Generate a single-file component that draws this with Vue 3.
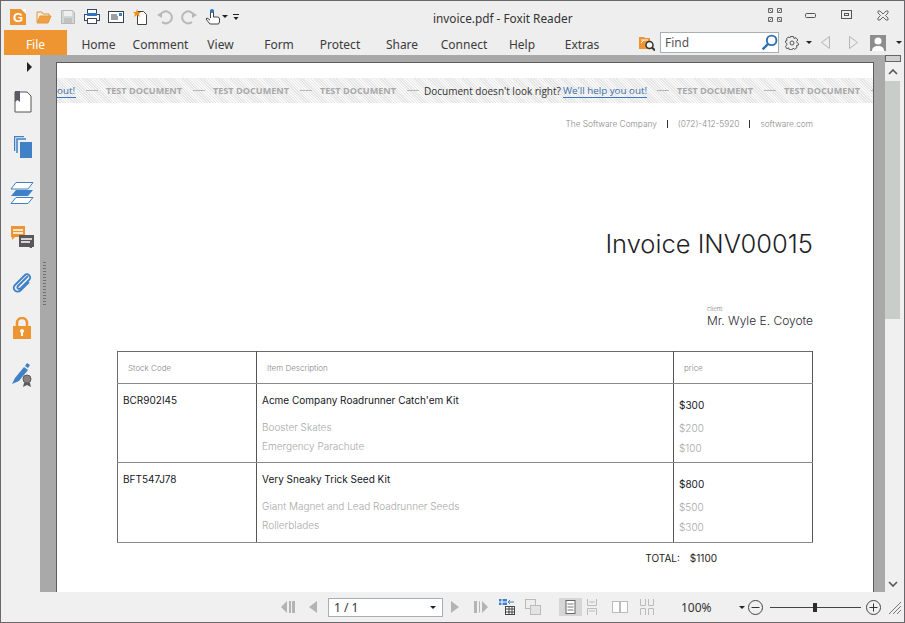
<script setup>
// Tab widths keep each label centred where the ribbon puts it
const tabs = [
  { label: 'Home', width: 63 },
  { label: 'Comment', width: 61 },
  { label: 'View', width: 59 },
  { label: 'Form', width: 58 },
  { label: 'Protect', width: 64 },
  { label: 'Share', width: 60 },
  { label: 'Connect', width: 64 },
  { label: 'Help', width: 52 },
  { label: 'Extras', width: 68 }
]

const rows = [
  {
    code: 'BCR902I45',
    title: "Acme Company Roadrunner Catch'em Kit",
    price: '$300',
    extras: [
      { name: 'Booster Skates', price: '$200' },
      { name: 'Emergency Parachute', price: '$100' }
    ]
  },
  {
    code: 'BFT547J78',
    title: 'Very Sneaky Trick Seed Kit',
    price: '$800',
    extras: [
      { name: 'Giant Magnet and Lead Roadrunner Seeds', price: '$500' },
      { name: 'Rollerblades', price: '$300' }
    ]
  }
]
</script>

<template>
  <div class="window">
    <header class="titlebar">
      <div class="quick">
        <svg class="ico" viewBox="0 0 16 16"><rect width="16" height="16" fill="#ee9430"/><text x="3" y="13" class="logo-g">G</text><path d="M11 0h5v5z" fill="#fff"/></svg>
        <svg class="ico ml2" viewBox="0 0 16 16"><path d="M1 13V3h5l1 2h6v2" fill="none" stroke="#e8962e"/><path d="M1 14l3-7h11l-3 7z" fill="#eda04a" stroke="#e8962e"/></svg>
        <svg class="ico" viewBox="0 0 16 16"><path d="M1.500 1.500h11l2 2v11h-13z" fill="#d4d6d6" stroke="#b5b8b8"/><rect x="4" y="2" width="8" height="5" fill="#eee"/><rect x="4" y="9" width="8" height="5" fill="#bfc2c2"/></svg>
        <svg class="ico" viewBox="0 0 16 16"><rect x="3.500" y="0.500" width="9" height="5" fill="#fff" stroke="#3a4a5c"/><rect x="0.500" y="5.500" width="15" height="6" fill="#fff" stroke="#3a4a5c"/><rect x="3" y="4" width="10" height="3" fill="#2f77c0"/><rect x="3.500" y="9.500" width="9" height="5" fill="#fff" stroke="#3a4a5c"/></svg>
        <svg class="ico" viewBox="0 0 16 16"><rect x="0.500" y="2.500" width="15" height="11" fill="#fff" stroke="#3a3f48"/><path d="M3 6h6M3 8h7M3 10h7" stroke="#3a3f48"/><rect x="11" y="4" width="3" height="3" fill="#3b7fc4"/></svg>
        <svg class="ico" viewBox="0 0 16 16"><path d="M5.500 2.500h6l3 3v10h-9z" fill="#fff" stroke="#444"/><path d="M5 0l1 3 3 0-2 2 1 3-3-2-3 2 1-3-2-2 3 0z" fill="#ee8f1f"/></svg>
        <svg class="ico ml1" viewBox="0 0 16 16"><path d="M3 7a6 6 0 1 1 2 6" fill="none" stroke="#b8b8b8" stroke-width="2"/><path d="M0 6l5-3v6z" fill="#b8b8b8"/></svg>
        <svg class="ico" viewBox="0 0 16 16"><path d="M13 7a6 6 0 1 0-2 6" fill="none" stroke="#b8b8b8" stroke-width="2"/><path d="M16 6l-5-3v6z" fill="#b8b8b8"/></svg>
        <svg class="ico" viewBox="0 0 16 16"><path d="M5.500 9V3a1 1 0 0 1 3 0v5h4a2 2 0 0 1 2 2v3l-1 2H5l-4-5 1-1 3 2" fill="#fff" stroke="#444"/><rect x="5" y="0" width="4" height="4" rx="2" fill="#2f77c0"/></svg>
        <span class="caret hand-caret"></span>
        <span class="more"></span>
      </div>
      <div class="doc-title">invoice.pdf - Foxit Reader</div>
      <div class="winbtns">
        <svg class="win-full" viewBox="0 0 14 14" width="14" height="14"><path d="M.5.5h4v4h-4zM9.500.5h4v4h-4zM.5 9.500h4v4h-4zM9.500 9.500h4v4h-4zM1.500 1.500l2 2M12.500 1.500l-2 2M1.500 12.500l2-2M12.500 12.500l-2-2" fill="none" stroke="#666"/></svg>
        <svg class="win-min" viewBox="0 0 12 5" width="12" height="5"><rect x=".5" y=".5" width="10" height="4" rx="1" fill="none" stroke="#555"/></svg>
        <svg class="win-max" viewBox="0 0 12 10" width="12" height="10"><rect x=".5" y=".5" width="10" height="8" fill="none" stroke="#555"/><rect x="3.500" y="3.500" width="4" height="2" fill="none" stroke="#555"/></svg>
        <svg class="win-close" viewBox="0 0 12 11" width="12" height="11"><path d="M1 1h2l3 3 3-3h2v2L8.500 5.500 11 8v2H9L6 7l-3 3H1V8l2.500-2.500L1 3z" fill="none" stroke="#666"/></svg>
      </div>
    </header>

    <nav class="ribbon">
      <div class="file-tab">File</div>
      <div
        v-for="tab in tabs"
        :key="tab.label"
        class="tab"
        :style="{ width: tab.width + 'px' }"
      >{{ tab.label }}</div>
      <div class="ribbon-right">
        <svg class="find-folder" viewBox="0 0 16 16" width="16" height="16"><path d="M0 2h5l1 1h5v11H0z" fill="#ee9430"/><path d="M2 5h7M2 8l3-3" stroke="#fff"/><circle cx="10.500" cy="10" r="3.500" fill="#f4f4f4" stroke="#333" stroke-width="1.500"/><path d="M13 12.500l3 3" stroke="#333" stroke-width="2"/></svg>
        <div class="find">
          <span>Find</span>
          <svg viewBox="0 0 16 16" width="17" height="17"><circle cx="10" cy="6" r="4.500" fill="none" stroke="#2f6fb5" stroke-width="1.800"/><path d="M6.500 9.500L1.500 14.500" stroke="#2f6fb5" stroke-width="2.200"/></svg>
        </div>
        <svg class="gear" viewBox="0 0 14 14" width="14" height="14"><circle cx="7" cy="7" r="2" fill="none" stroke="#555"/><path d="M5.500.5h3l.5 2 2-.8 1.800 2.300-1.300 1.600.9 1.400 1.100.5v1.500l-2 .5.500 2-2.200 1.800-1.800-1.100-.8 1.500h-3l-.5-1.800-2 .8L.5 10.300 2 8.700 1.500 7 .5 6.500V5l1.500-.5-.5-2L4 .9l1 1z" fill="none" stroke="#555"/></svg>
        <span class="caret gear-caret"></span>
        <svg class="nav-l" viewBox="0 0 9 13" width="9" height="13"><path d="M8.500.5v12l-8-6z" fill="none" stroke="#b5b5b5"/></svg>
        <svg class="nav-r" viewBox="0 0 9 13" width="9" height="13"><path d="M.5.5v12l8-6z" fill="none" stroke="#b5b5b5"/></svg>
        <svg class="avatar" viewBox="0 0 16 16" width="16" height="16"><rect width="16" height="16" fill="#8d8d8d"/><circle cx="8" cy="6" r="3.500" fill="#fff"/><path d="M2 16c0-4 3-5 6-5s6 1 6 5z" fill="#fff"/></svg>
        <span class="caret avatar-caret"></span>
      </div>
    </nav>

    <main class="body">
      <aside class="sidebar">
        <span class="side-arrow"></span>
        <svg class="side-ico s-book" viewBox="0 0 18 22" width="18" height="22"><path d="M1 1h12l4 4v16H1z" fill="#fff" stroke="#555"/><path d="M1 0h5v11l-2.500-2L1 11z" fill="#5a5a66"/></svg>
        <svg class="side-ico s-pages" viewBox="0 0 18 22" width="18" height="22"><path d="M.5 15V.5H10M3 17V3h9" fill="none" stroke="#3f80c6" stroke-width="1.500"/><path d="M6 6h12v16H6z" fill="#3f80c6"/></svg>
        <svg class="side-ico s-layers" viewBox="0 0 24 22" width="24" height="22"><path d="M6 .5h17L18 7H1z" fill="#fff" stroke="#3f80c6"/><path d="M6 8h17l-5 6H1z" fill="#3f80c6"/><path d="M6 15.500h17l-5 6H1z" fill="#fff" stroke="#3f80c6"/></svg>
        <svg class="side-ico s-comment" viewBox="0 0 23 22" width="23" height="22"><path d="M0 0h14v11H4l-3 3v-3H0z" fill="#ee9430"/><path d="M2 4h10M2 7h10" stroke="#fff" stroke-width="1.300"/><path d="M8 9h15v12h-2v2l-3-2H8z" fill="#5a565a"/><path d="M10 13h11M10 16h9" stroke="#fff" stroke-width="1.300"/></svg>
        <svg class="side-ico s-clip" viewBox="0 0 20 22" width="20" height="22"><path d="M16 5L6 15c-2 2 1 4 3 2L17 9c3-3-1-8-4-5L3 14c-4 4 2 9 6 5l8-8" fill="none" stroke="#3f80c6" stroke-width="1.800" transform="translate(0 -1)"/></svg>
        <svg class="side-ico s-lock" viewBox="0 0 18 22" width="18" height="22"><path d="M4 10V6a5 5 0 0 1 10 0v4" fill="none" stroke="#ee9430" stroke-width="2.500"/><rect y="9" width="18" height="13" fill="#ee9430"/><circle cx="9" cy="14" r="2" fill="#fff"/><rect x="8" y="15" width="2" height="4" fill="#fff"/></svg>
        <svg class="side-ico s-sign" viewBox="0 0 21 24" width="21" height="24"><path d="M0 21l3-6L12 4l4 3-9 11z" fill="#3f80c6"/><path d="M13 3l2-3 3 2-2 3z" fill="#3f80c6"/><circle cx="15" cy="16" r="4" fill="#8a8276" stroke="#5a5a66"/><path d="M12 20l-1 4 4-2 4 2-1-4" fill="#5a5a66"/></svg>
      </aside>

      <section class="workspace">
        <span class="grip"></span>
        <article class="page">
          <div class="banner">
            <span class="link cut">out!</span>
            <span class="dash"></span><b>TEST DOCUMENT</b>
            <span class="dash"></span><b>TEST DOCUMENT</b>
            <span class="dash"></span><b>TEST DOCUMENT</b>
            <span class="dash"></span>
            <span class="ask">Document doesn't look right?</span>
            <span class="link">We'll help you out!</span>
            <span class="dash"></span><b>TEST DOCUMENT</b>
            <span class="dash"></span><b>TEST DOCUMENT</b>
            <span class="dash"></span>
          </div>

          <div class="contact">
            <span>The Software Company</span>
            <i></i>
            <span>(072)-412-5920</span>
            <i></i>
            <span>software.com</span>
          </div>

          <h1>Invoice INV00015</h1>

          <div class="client-label">client:</div>
          <div class="client">Mr. Wyle E. Coyote</div>

          <table class="items">
            <thead>
              <tr>
                <th class="c-code">Stock Code</th>
                <th class="c-desc">Item Description</th>
                <th class="c-price">price</th>
              </tr>
            </thead>
            <tbody>
              <tr v-for="row in rows" :key="row.code">
                <td class="code">{{ row.code }}</td>
                <td class="desc">
                  <div class="main">{{ row.title }}</div>
                  <div v-for="e in row.extras" :key="e.name" class="extra">{{ e.name }}</div>
                </td>
                <td class="price">
                  <div class="main">{{ row.price }}</div>
                  <div v-for="e in row.extras" :key="e.name" class="extra">{{ e.price }}</div>
                </td>
              </tr>
            </tbody>
          </table>

          <div class="total">
            <span>TOTAL:</span>
            <span>$1100</span>
          </div>
        </article>
      </section>

      <div class="scrollbar">
        <span class="scroll-top"></span>
        <svg class="scroll-btn" viewBox="0 0 10 6" width="10" height="6"><path d="M1 5l4-4 4 4" fill="none" stroke="#555" stroke-width="1.600"/></svg>
        <div class="thumb"></div>
        <svg class="scroll-btn down" viewBox="0 0 10 6" width="10" height="6"><path d="M1 1l4 4 4-4" fill="none" stroke="#555" stroke-width="1.600"/></svg>
      </div>
    </main>

    <footer class="status">
      <svg class="st first" viewBox="0 0 14 14" width="14" height="14"><path d="M6 1v12L0 7zM8 1h2v12H8zM14 1v12h-3V1z" fill="#b4b4b4"/></svg>
      <svg class="st prev" viewBox="0 0 9 14" width="9" height="14"><path d="M9 1v12L1 7z" fill="#b4b4b4"/></svg>
      <div class="page-box"><span>1 / 1</span><span class="caret"></span></div>
      <svg class="st next" viewBox="0 0 9 14" width="9" height="14"><path d="M0 1v12l8-6z" fill="#b4b4b4"/></svg>
      <svg class="st last" viewBox="0 0 14 14" width="14" height="14"><path d="M0 1h3v12H0zM5 1v12l1-1V2zM8 1v12l6-6z" fill="#b4b4b4"/></svg>
      <svg class="st view1" viewBox="0 0 16 16" width="16" height="16"><rect x="0" y="0" width="8" height="6" fill="#3f80c6"/><path d="M0 3h8M3 0v6" stroke="#fff"/><rect x="6.500" y="7.500" width="9" height="8" fill="#fff" stroke="#444"/><path d="M7 10h8M7 13h8M10 8v7M13 8v7" stroke="#444"/><path d="M9 3h6M9 3l2-2M9 3l2 2" stroke="#3f80c6" fill="none"/></svg>
      <svg class="st view2" viewBox="0 0 16 16" width="16" height="16"><rect x=".5" y=".5" width="10" height="9" fill="#eee" stroke="#bbb"/><rect x="5.500" y="6.500" width="10" height="9" fill="#e4e4e4" stroke="#bbb"/></svg>
      <span class="single">
        <svg viewBox="0 0 10 14" width="11" height="14"><rect x=".5" y=".5" width="9" height="13" fill="#fff" stroke="#666"/><path d="M2 4h6M2 7h6M2 10h6" stroke="#777"/></svg>
      </span>
      <svg class="st continuous" viewBox="0 0 14 16" width="14" height="16"><path d="M2.500 0v6.500h9V0M2.500 16V9.500h9V16M4 3h6M4 12h6" fill="none" stroke="#bbb"/></svg>
      <svg class="st facing" viewBox="0 0 16 14" width="16" height="14"><rect x=".5" y="1.500" width="7" height="11" fill="#fff" stroke="#bbb"/><rect x="8.500" y="1.500" width="7" height="11" fill="#fff" stroke="#bbb"/></svg>
      <svg class="st cont-facing" viewBox="0 0 16 16" width="16" height="16"><path d="M1.500 0v6.500h5V0M9.500 0v6.500h5V0M1.500 16V9.500h5V16M9.500 16V9.500h5V16" fill="none" stroke="#bbb"/></svg>
      <span class="zoom-val">100%</span>
      <span class="caret zoom-caret"></span>
      <svg class="st minus" viewBox="0 0 15 15" width="15" height="15"><circle cx="7.500" cy="7.500" r="7" fill="none" stroke="#444"/><path d="M3.500 7.500h8" stroke="#333"/></svg>
      <div class="slider"><span class="knob"></span></div>
      <svg class="st plus" viewBox="0 0 15 15" width="15" height="15"><circle cx="7.500" cy="7.500" r="7" fill="none" stroke="#444"/><path d="M3.500 7.500h8M7.500 3.500v8" stroke="#333"/></svg>
      <svg class="st resize" viewBox="0 0 14 14" width="14" height="14"><path d="M1 13L13 1M5 13l8-8M9 13l4-4" stroke="#777"/></svg>
    </footer>
  </div>
</template>

<style scoped>
.window {
  width: 905px;
  height: 623px;
  box-sizing: border-box;
  border: 1px solid #6a666a;
  display: flex;
  flex-direction: column;
  overflow: hidden;
  background: #f0f0f0;
  font-family: "Noto Sans", "Open Sans", sans-serif;
  color: #333;
}

/* title bar */
.titlebar {
  height: 29px;
  flex: none;
  position: relative;
  display: flex;
  align-items: center;
  background: #eeeeee;
}
.quick {
  display: flex;
  align-items: center;
  gap: 8px;
  padding-left: 9px;
  margin-top: 2px;
}
.ico {
  width: 16px;
  height: 16px;
  flex: none;
}
.logo-g {
  font: bold 13px "Liberation Sans", sans-serif;
  fill: #fff;
}
.ml1 { margin-left: 1px; }
.ml2 { margin-left: 2px; }
.caret {
  width: 0;
  height: 0;
  flex: none;
  border-left: 3px solid transparent;
  border-right: 3px solid transparent;
  border-top: 3px solid #222;
}
.hand-caret { margin-left: -7px; }
.more {
  width: 6px;
  height: 5px;
  margin-left: -3px;
  margin-top: 1px;
  border-top: 1px solid #222;
  background: linear-gradient(#222, #222) 0 2px / 6px 3px no-repeat;
  clip-path: polygon(0 0, 100% 0, 100% 40%, 50% 100%, 0 40%);
}
.doc-title {
  position: absolute;
  left: 432px;
  top: 9px;
  font-size: 11.800px;
  line-height: 16px;
  white-space: nowrap;
}
.winbtns {
  margin-left: auto;
  display: flex;
  align-items: center;
}
.win-full { margin-right: 23px; margin-top: -2px; }
.win-min { margin-right: 24px; margin-top: -1px; }
.win-max { margin-right: 24px; margin-top: -1px; }
.win-close { margin-right: 15px; margin-top: -1px; }

/* ribbon tabs */
.ribbon {
  height: 25px;
  flex: none;
  display: flex;
  align-items: stretch;
  padding-left: 3px;
  background: #eeeeee;
  font-size: 12px;
}
.file-tab {
  width: 63px;
  background: #ee9430;
  color: #fff;
  text-align: center;
  line-height: 29px;
}
.tab {
  flex: none;
  text-align: center;
  line-height: 29px;
  color: #3c3c3c;
  white-space: nowrap;
}
.ribbon-right {
  flex: 1;
  display: flex;
  align-items: center;
  padding-left: 23px;
}
.find-folder { margin-top: 1px; }
.find {
  width: 119px;
  height: 21px;
  margin-left: 5px;
  box-sizing: border-box;
  border: 1px solid #a9aeb3;
  background: #fff;
  display: flex;
  align-items: center;
  justify-content: space-between;
  padding: 0 0 0 4px;
  color: #555;
}
.gear { margin-left: 6px; }
.gear-caret { margin-left: 7px; }
.nav-l { margin-left: 9px; }
.nav-r { margin-left: 19px; }
.avatar { margin-left: 12px; }
.avatar-caret { margin-left: 10px; }

/* main area */
.body {
  flex: 1;
  min-height: 0;
  display: flex;
}
.sidebar {
  width: 39px;
  flex: none;
  display: flex;
  flex-direction: column;
  background: #f0f0f0;
  position: relative;
}
.side-arrow {
  width: 0;
  height: 0;
  margin: 7px 0 0 26px;
  border-top: 5px solid transparent;
  border-bottom: 5px solid transparent;
  border-left: 5px solid #222;
}
.side-ico { flex: none; }
.s-book { margin: 19px 0 0 13px; }
.s-pages { margin: 23px 0 0 13px; }
.s-layers { margin: 24px 0 0 9px; }
.s-comment { margin: 22px 0 0 10px; }
.s-clip { margin: 24px 0 0 11px; }
.s-lock { margin: 23px 0 0 12px; }
.s-sign { margin: 24px 0 0 11px; }

.workspace {
  flex: 1;
  min-width: 0;
  background: #a9a9a9;
  padding: 7px 11px 0 16px;
  display: flex;
  position: relative;
}
.grip {
  position: absolute;
  left: 3px;
  top: 207px;
  width: 3px;
  height: 44px;
  background: repeating-linear-gradient(#6f6f6f 0 1px, transparent 1px 3px);
}
.page {
  flex: 1;
  min-width: 0;
  background: #fff;
  border: 1px solid #5c5c5c;
  border-width: 1px 1px 0;
  overflow: hidden;
  font-family: Inter, "Noto Sans", sans-serif;
}
.banner {
  margin-top: 15px;
  height: 25px;
  display: flex;
  align-items: center;
  overflow: hidden;
  white-space: nowrap;
  font-family: "Open Sans", sans-serif;
  font-size: 10px;
  background: repeating-linear-gradient(45deg, #e6e6e6 0 1px, #f8f8f8 1px 2px);
}
.banner b {
  width: 77px;
  flex: none;
  color: #a9a9a9;
  font-size: 9.100px;
  font-weight: 700;
  white-space: nowrap;
}
.dash {
  width: 12px;
  height: 1px;
  flex: none;
  margin: 0 8.500px 0 9.500px;
  background: #b5b5b5;
}
.ask {
  width: 139px;
  flex: none;
  margin-left: -3px;
  color: #333;
  font-size: 10px;
}
.link {
  color: #3a6ea8;
  font-size: 9.800px;
  border-bottom: 1px solid #3a78bd;
  line-height: 12px;
  flex: none;
  margin-top: 1px;
}
.cut { width: 19px; }
.contact {
  margin: 15px 60px 0 0;
  display: flex;
  justify-content: flex-end;
  align-items: center;
  gap: 7px;
  height: 12px;
  font-size: 8.300px;
  font-weight: 300;
  color: #888;
  white-space: nowrap;
}
.contact i {
  width: 1px;
  height: 8px;
  margin: 0 3px;
  background: #333;
}
h1 {
  margin: 99px 60px 0 0;
  text-align: right;
  font-size: 25.500px;
  line-height: 30px;
  font-weight: 300;
  letter-spacing: 0;
  color: #1f1f28;
}
.client-label {
  margin: 46px 0 0 650px;
  font-size: 6px;
  line-height: 8px;
  font-weight: 300;
  color: #777;
}
.client {
  margin: 0 60px 0 0;
  text-align: right;
  font-size: 12px;
  line-height: 16px;
  font-weight: 300;
  color: #2a2a33;
}
.items {
  width: 695px;
  margin: 22px 0 0 60px;
  border-collapse: collapse;
  table-layout: fixed;
  font-size: 10px;
  border: 1px solid #6b6b6b;
}
.items th {
  height: 32px;
  box-sizing: border-box;
  padding: 0 0 0 10px;
  text-align: left;
  font-size: 8px;
  font-weight: 300;
  color: #888;
  border-bottom: 1px solid #8a8a8a;
  border-right: 1px solid #555;
}
.items td {
  height: 79px;
  padding: 7px 0 0 5px;
  vertical-align: top;
  border-bottom: 1px solid #8a8a8a;
  border-right: 1px solid #555;
  color: #16161e;
  box-sizing: border-box;
}
.items tr:last-child td { height: 80px; }
.c-code { width: 139px; }
.c-desc { width: 417px; }
.c-price { width: 139px; }
.code, .main {
  line-height: 18px;
  white-space: nowrap;
}
.extra {
  line-height: 19px;
  color: #a8a8a8;
  font-weight: 300;
}
.desc .main { margin-bottom: 9px; }
.items td.price { padding-top: 12px; }
.price .main { margin-bottom: 4px; }
.price .extra { line-height: 20px; }
.total {
  margin: 7px 156px 0 0;
  display: flex;
  justify-content: flex-end;
  gap: 10px;
  font-size: 10px;
  line-height: 16px;
  color: #222;
}

/* scrollbar */
.scrollbar {
  width: 19px;
  flex: none;
  display: flex;
  flex-direction: column;
  background: #f0f0f0;
}
.scroll-top {
  width: 16px;
  height: 7px;
  box-sizing: border-box;
  border: 1px solid #666;
  background: #d0d0d0;
}
.scroll-btn {
  margin: 7px 0 0 3px;
  flex: none;
}
.thumb {
  width: 15px;
  height: 238px;
  margin-top: 6px;
  background: #c8cdca;
}
.scroll-btn.down { margin-top: auto; margin-bottom: 5px; }

/* status bar */
.status {
  height: 30px;
  flex: none;
  display: flex;
  align-items: center;
  background: #f0f0f0;
}
.st { flex: none; }
.first { margin-left: 280px; }
.prev { margin-left: 13px; }
.page-box {
  width: 115px;
  height: 19px;
  margin-left: 11px;
  box-sizing: border-box;
  border: 1px solid #a9aeb3;
  background: #fff;
  display: flex;
  align-items: center;
  justify-content: space-between;
  padding: 0 6px 0 5px;
  font-size: 12px;
}
.next { margin-left: 8px; }
.last { margin-left: 14px; }
.view1 { margin-left: 11px; }
.view2 { margin-left: 10px; }
.single {
  width: 23px;
  height: 18px;
  margin-left: 18px;
  background: #d6d6d6;
  display: flex;
  align-items: center;
  justify-content: center;
  flex: none;
}
.continuous { margin-left: 3px; }
.facing { margin-left: 13px; }
.cont-facing { margin-left: 11px; }
.zoom-val {
  width: 34px;
  margin-left: 26px;
  font-size: 12px;
  flex: none;
}
.zoom-caret { margin-left: 24px; }
.minus { margin-left: 3px; }
.slider {
  width: 91px;
  height: 1px;
  margin-left: 7px;
  background: #444;
  position: relative;
  flex: none;
}
.knob {
  position: absolute;
  left: 43px;
  top: -4px;
  width: 4px;
  height: 9px;
  background: #2f2a33;
}
.plus { margin-left: 5px; }
.resize { margin-left: 7px; margin-top: 2px; }
</style>

<style>
html, body {
  margin: 0;
  background: #f0f0f0;
}
</style>
